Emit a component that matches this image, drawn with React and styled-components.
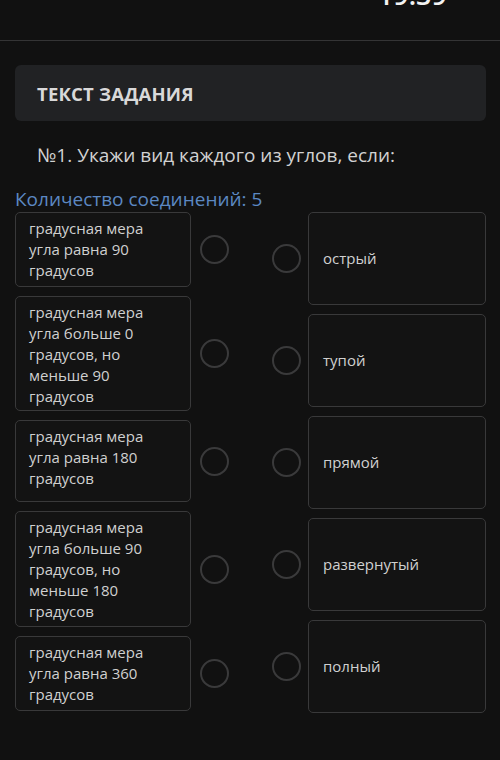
import React from 'react';
import styled, { createGlobalStyle } from 'styled-components';

const GlobalStyle = createGlobalStyle`
  html, body {
    margin: 0;
    padding: 0;
    background: #111111;
  }
  body {
    font-family: "Open Sans", "Noto Sans", sans-serif;
    color: #d4d4d4;
  }
`;

const Screen = styled.div`
  width: 500px;
  height: 760px;
  background: #111111;
  overflow: hidden;
`;

const StatusBar = styled.div`
  height: 40px;
  border-bottom: 1px solid #343435;
  display: flex;
  justify-content: flex-end;
  align-items: flex-end;
  padding-right: 53px;
  overflow: hidden;
`;

const Time = styled.div`
  font-size: 27px;
  font-weight: 600;
  color: #f2f2f2;
  line-height: 1;
  margin-bottom: 32px;
`;

const Content = styled.div`
  padding: 0 14px 0 15px;
`;

const HeaderCard = styled.div`
  margin-top: 24px;
  height: 56px;
  border-radius: 6px;
  background: #212224;
  display: flex;
  align-items: center;
  padding-left: 22px;
  font-size: 18.5px;
  font-weight: 700;
  color: #d9d9d9;
  letter-spacing: 0.2px;
`;

const Question = styled.div`
  margin-top: 21px;
  padding-left: 22px;
  font-size: 19px;
  line-height: 26px;
  color: #d2d2d2;
`;

const Count = styled.div`
  margin-top: 19px;
  font-size: 19px;
  line-height: 24px;
  color: #5c88c2;
`;

const Columns = styled.div`
  margin-top: 1px;
  display: flex;
  justify-content: space-between;
`;

const Column = styled.div`
  width: 214px;
  display: flex;
  flex-direction: column;
  gap: ${({ $gap }) => $gap}px;
`;

const Item = styled.div`
  display: flex;
  align-items: center;
  gap: ${({ $gap }) => $gap}px;
`;

const Box = styled.div`
  box-sizing: border-box;
  border: 1.5px solid #39393a;
  border-radius: 5px;
  background: #131313;
  font-size: 15px;
  line-height: 21px;
  color: #d0d0d0;
`;

const LeftBox = styled(Box)`
  width: 177px;
  min-height: ${({ $h }) => $h}px;
  padding: 5px 30px 2px 13px;
`;

const RightBox = styled(Box)`
  width: 178px;
  height: 93px;
  padding-left: 14px;
  display: flex;
  align-items: center;
`;

const Dot = styled.div`
  box-sizing: border-box;
  flex: none;
  width: 29px;
  height: 29px;
  border-radius: 50%;
  border: 2.5px solid #3a3a3b;
`;

const left = [
  { text: 'градусная мера угла равна 90 градусов', h: 75 },
  { text: 'градусная мера угла больше 0 градусов, но меньше 90 градусов', h: 115 },
  { text: 'градусная мера угла равна 180 градусов', h: 82 },
  { text: 'градусная мера угла больше 90 градусов, но меньше 180 градусов', h: 116 },
  { text: 'градусная мера угла равна 360 градусов', h: 75 },
];

const right = ['острый', 'тупой', 'прямой', 'развернутый', 'полный'];

export default function App() {
  return (
    <Screen>
      <GlobalStyle />
      <StatusBar>
        <Time>19:39</Time>
      </StatusBar>
      <Content>
        <HeaderCard>ТЕКСТ ЗАДАНИЯ</HeaderCard>
        <Question>№1. Укажи вид каждого из углов, если:</Question>
        <Count>Количество соединений: 5</Count>
        <Columns>
          <Column $gap={9}>
            {left.map((item) => (
              <Item key={item.text} $gap={9}>
                <LeftBox $h={item.h}>{item.text}</LeftBox>
                <Dot />
              </Item>
            ))}
          </Column>
          <Column $gap={9}>
            {right.map((label) => (
              <Item key={label} $gap={7}>
                <Dot />
                <RightBox>{label}</RightBox>
              </Item>
            ))}
          </Column>
        </Columns>
      </Content>
    </Screen>
  );
}
